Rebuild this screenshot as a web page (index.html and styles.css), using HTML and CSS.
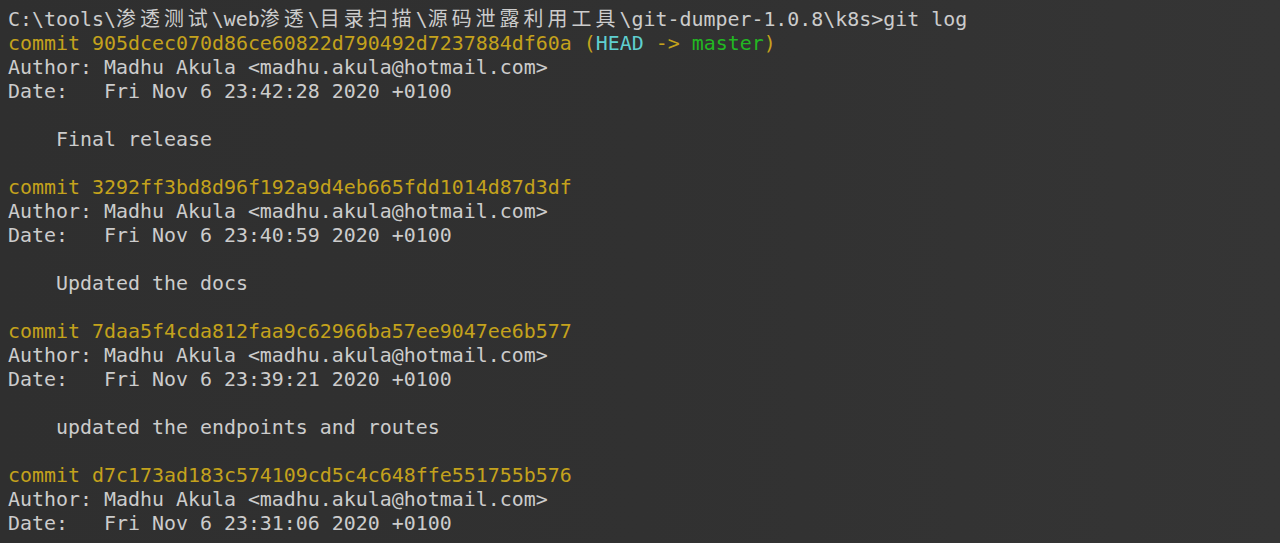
FILE: index.html
```html
<!DOCTYPE html>
<html>
<head>
<meta charset="utf-8">
<link rel="stylesheet" href="styles.css">
</head>
<body>
<pre class="term">C:\tools\<span class="cjk">渗透测试</span>\web<span class="cjk">渗透</span>\<span class="cjk">目录扫描</span>\<span class="cjk">源码泄露利用工具</span>\git-dumper-1.0.8\k8s&gt;git log
<span class="y">commit 905dcec070d86ce60822d790492d7237884df60a (<span class="c">HEAD</span> -&gt; <span class="g">master</span>)</span>
Author: Madhu Akula &lt;madhu.akula@hotmail.com&gt;
Date:   Fri Nov 6 23:42:28 2020 +0100

    Final release

<span class="y">commit 3292ff3bd8d96f192a9d4eb665fdd1014d87d3df</span>
Author: Madhu Akula &lt;madhu.akula@hotmail.com&gt;
Date:   Fri Nov 6 23:40:59 2020 +0100

    Updated the docs

<span class="y">commit 7daa5f4cda812faa9c62966ba57ee9047ee6b577</span>
Author: Madhu Akula &lt;madhu.akula@hotmail.com&gt;
Date:   Fri Nov 6 23:39:21 2020 +0100

    updated the endpoints and routes

<span class="y">commit d7c173ad183c574109cd5c4c648ffe551755b576</span>
Author: Madhu Akula &lt;madhu.akula@hotmail.com&gt;
Date:   Fri Nov 6 23:31:06 2020 +0100</pre>
</body>
</html>
```
FILE: styles.css
```css
html, body {
  margin: 0;
  padding: 0;
  height: 100%;
  overflow: hidden;
}
body {
  background: linear-gradient(90deg, #2f2f2f 0%, #313131 50%, #353535 100%);
}
.term {
  margin: 0;
  padding: 6px 8px 0 8px;
  font-family: "DejaVu Sans Mono", "Noto Sans CJK SC", monospace;
  font-size: 19.93px;
  line-height: 24px;
  color: #cccccc;
  white-space: pre;
}
.cjk {
  font-family: "Noto Sans CJK SC", sans-serif;
  letter-spacing: 4.05px;
}
.y { color: #c4a21c; }
.c { color: #5fcfd0; }
.g { color: #22b822; }
```
